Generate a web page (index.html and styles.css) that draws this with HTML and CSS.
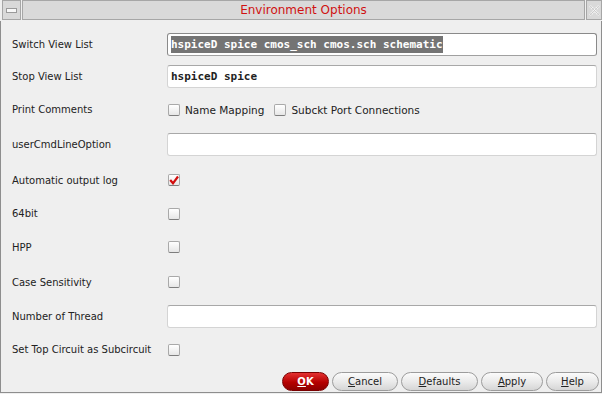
FILE: index.html
```html
<!DOCTYPE html>
<html lang="en">
<head>
    <meta charset="UTF-8">
    <title>Environment Options</title>
    <link rel="stylesheet" href="styles.css">
</head>
<body>
<div class="ventana">
    <div class="barra">
        <div class="barra-btn izq"><span class="minimizar"></span></div>
        <div class="barra-titulo">Environment Options</div>
        <div class="barra-btn der">
            <svg width="11" height="11" viewBox="0 0 11 11">
                <path d="M1 1 L10 10 M10 1 L1 10" stroke="#f7f7f7" stroke-width="2.4" stroke-dasharray="1.4 1"/>
                <path d="M1 1 L10 10 M10 1 L1 10" stroke="#c4c4c4" stroke-width="0.8" fill="none"/>
            </svg>
        </div>
    </div>
    <div class="form">
        <div class="etiqueta">Switch View List</div>
        <div class="control"><div class="entrada foco"><span class="sel">hspiceD spice cmos_sch cmos.sch schematic</span></div></div>

        <div class="etiqueta">Stop View List</div>
        <div class="control"><div class="entrada">hspiceD spice</div></div>

        <div class="etiqueta">Print Comments</div>
        <div class="control">
            <span class="caja"></span><span class="opcion">Name Mapping</span>
            <span class="caja"></span><span class="opcion">Subckt Port Connections</span>
        </div>

        <div class="etiqueta">userCmdLineOption</div>
        <div class="control"><div class="entrada"></div></div>

        <div class="etiqueta">Automatic output log</div>
        <div class="control">
            <span class="caja">
                <svg width="10" height="10" viewBox="0 0 10 10"><path d="M1.2 5 L4 8.3 L9 1.5" stroke="#d20e0e" stroke-width="2.2" fill="none"/></svg>
            </span>
        </div>

        <div class="etiqueta">64bit</div>
        <div class="control"><span class="caja"></span></div>

        <div class="etiqueta">HPP</div>
        <div class="control"><span class="caja"></span></div>

        <div class="etiqueta">Case Sensitivity</div>
        <div class="control"><span class="caja"></span></div>

        <div class="etiqueta">Number of Thread</div>
        <div class="control"><div class="entrada"></div></div>

        <div class="etiqueta">Set Top Circuit as Subcircuit</div>
        <div class="control"><span class="caja"></span></div>
    </div>
    <div class="botones">
        <div class="boton ok"><u>O</u>K</div>
        <div class="boton b-cancel"><u>C</u>ancel</div>
        <div class="boton b-defaults"><u>D</u>efaults</div>
        <div class="boton b-apply"><u>A</u>pply</div>
        <div class="boton b-help"><u>H</u>elp</div>
    </div>
</div>
</body>
</html>
```

FILE: styles.css
```css
html, body {
    margin: 0;
    padding: 0;
    background: #efefef;
}
body {
    font-family: "DejaVu Sans", sans-serif;
    font-size: 10px;
    color: #222;
}
.ventana {
    width: 600px;
    height: 392px;
    border: 1px solid #8e8e8e;
    border-top: none;
    background: #efefef;
    display: flex;
    flex-direction: column;
}
.barra {
    height: 21px;
    display: flex;
    gap: 1px;
    background: #efefef;
    margin: 0 -1px;
}
.barra-btn, .barra-titulo {
    background: #d9d9d9;
    border: 1px solid #a6a6a6;
    box-sizing: border-box;
    height: 20px;
    display: flex;
    align-items: center;
    justify-content: center;
}
.barra-btn.izq {
    width: 19px;
    margin-left: 2px;
}
.barra-btn.der {
    width: 16px;
}
.minimizar {
    width: 9px;
    height: 3px;
    border: 1px solid #9a9a9a;
    background: #f8f8f8;
    margin-top: 1px;
}
.barra-titulo {
    flex: 1;
    color: #d01212;
    font-size: 12px;
}
.form {
    display: grid;
    grid-template-columns: 155px 1fr;
    grid-template-rows: 32px 33px 33px 37px 34px 33px 34px 36px 33px 33px;
    padding: 7px 4px 0 11px;
}
.etiqueta {
    display: flex;
    align-items: center;
}
.control {
    display: flex;
    align-items: center;
}
.entrada {
    flex: 1;
    height: 23px;
    box-sizing: border-box;
    background: #fff;
    border: 1px solid #d4d4d4;
    border-top-color: #a8a8a8;
    border-radius: 3px;
    font-family: "DejaVu Sans Mono", monospace;
    font-weight: bold;
    font-size: 11px;
    padding: 0 3px;
    display: flex;
    align-items: center;
    color: #222;
}
.entrada.foco {
    border: 1px solid #8a8a8a;
    border-bottom-color: #a0a0a0;
}
.sel {
    background: #747474;
    color: #fff;
    padding: 2px 0;
}
.caja {
    width: 12px;
    height: 12px;
    box-sizing: border-box;
    border: 1px solid #a9a9a9;
    border-bottom-color: #7d7d7d;
    border-radius: 2px;
    background: linear-gradient(#ffffff, #e6e6e6);
    margin-left: 1px;
    display: flex;
    align-items: center;
    justify-content: center;
}
.opcion {
    margin: 0 9px 0 5px;
    font-size: 10.5px;
}
.botones {
    margin-top: auto;
    height: 20px;
    padding-top: 6px;
    display: flex;
    justify-content: flex-end;
    align-items: flex-start;
    gap: 3px;
    padding-right: 2px;
}
.boton {
    height: 19px;
    box-sizing: border-box;
    border: 1px solid #9c9c9c;
    border-radius: 10px;
    background: linear-gradient(#fbfbfb, #e9e9e9 55%, #d6d6d6);
    display: flex;
    align-items: center;
    justify-content: center;
    color: #222;
}
.boton.ok {
    width: 47px;
    background: linear-gradient(#e43030, #b50000 55%, #8c0000);
    border-color: #7a0000;
    color: #fff;
    font-weight: bold;
}
.b-cancel { width: 66px; }
.b-defaults { width: 77px; }
.b-apply { width: 62px; }
.b-help { width: 53px; }
```
